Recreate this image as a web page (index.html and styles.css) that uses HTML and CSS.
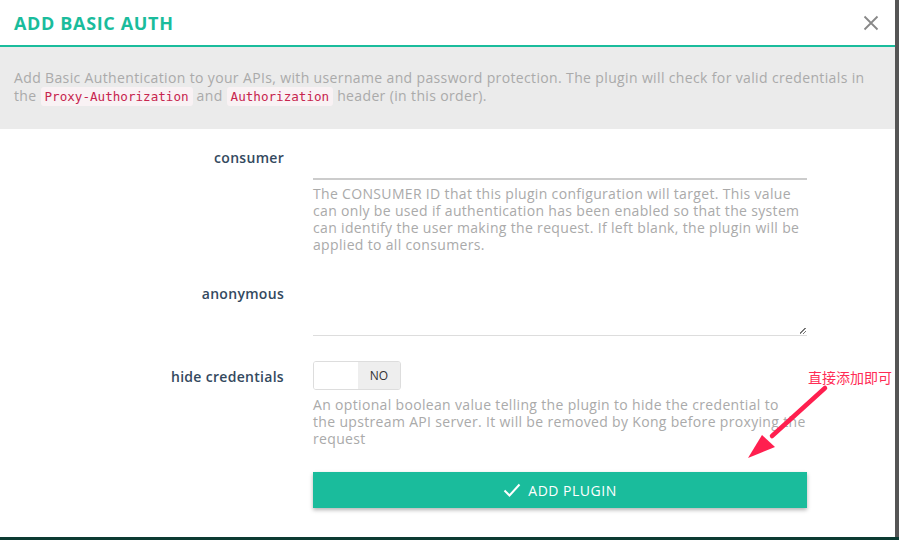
FILE: index.html
```html
<!DOCTYPE html>
<html>
<head>
<meta charset="utf-8">
<link rel="stylesheet" href="styles.css">
</head>
<body>
<div class="modal">
  <div class="modal-header">
    <h1 class="modal-title">ADD BASIC AUTH</h1>
    <button class="close" aria-label="close">
      <svg width="16" height="16" viewBox="0 0 16 16"><path d="M1.5 1.5 L14.5 14.5 M14.5 1.5 L1.5 14.5" stroke="#888" stroke-width="1.8" fill="none"/></svg>
    </button>
  </div>
  <div class="modal-desc">
    Add Basic Authentication to your APIs, with username and password protection. The plugin will check for valid credentials in the <code>Proxy-Authorization</code> and <code>Authorization</code> header (in this order).
  </div>
  <form class="form">
    <div class="row row-consumer">
      <label class="label">consumer</label>
      <div class="field">
        <input class="input" type="text">
        <p class="help">The CONSUMER ID that this plugin configuration will target. This value can only be used if authentication has been enabled so that the system can identify the user making the request. If left blank, the plugin will be applied to all consumers.</p>
      </div>
    </div>
    <div class="row row-anon">
      <label class="label">anonymous</label>
      <div class="field">
        <div class="textarea"><span class="grip"></span></div>
      </div>
    </div>
    <div class="row row-hide">
      <label class="label">hide credentials</label>
      <div class="field">
        <div class="toggle"><span class="toggle-off"></span><span class="toggle-no">NO</span></div>
        <p class="help">An optional boolean value telling the plugin to hide the credential to<br>the upstream API server. It will be removed by Kong before proxying the request</p>
      </div>
    </div>
    <div class="row row-btn">
      <span></span>
      <button type="button" class="btn">
        <svg width="18" height="14" viewBox="0 0 18 14"><path d="M1.5 7.5 L6.5 12.5 L16.5 1.5" stroke="#fff" stroke-width="2" fill="none"/></svg>
        ADD PLUGIN
      </button>
    </div>
  </form>
  <div class="note">直接添加即可</div>
  <svg class="arrow" width="90" height="80" viewBox="0 0 90 80">
    <path d="M79 4 L26 52" stroke="#ff1f4f" stroke-width="4.5" stroke-linecap="round"/>
    <path d="M2 74 L16 51 L29 63 Z" fill="#ff1f4f"/>
  </svg>
</div>
</body>
</html>
```

FILE: styles.css
```css
html, body {
  margin: 0;
  padding: 0;
}
body {
  background: #0c3b32;
  width: 899px;
  height: 540px;
  overflow: hidden;
  font-family: "Open Sans", "Noto Sans CJK SC", sans-serif;
}
.modal {
  position: relative;
  width: 895px;
  height: 537px;
  background: #fff;
  border-right: 4px solid #555;
}
.modal-header {
  height: 45px;
  border-bottom: 2px solid #1abc9c;
  display: flex;
  align-items: center;
  justify-content: space-between;
  padding: 0 14px;
}
.modal-title {
  margin: 0;
  font-size: 18px;
  font-weight: 700;
  color: #1abc9c;
  letter-spacing: 0.65px;
}
.close {
  border: 0;
  background: none;
  padding: 0;
  margin-right: 2px;
  display: flex;
}
.modal-desc {
  background: #ebebeb;
  padding: 22px 14px 23px;
  font-size: 14px;
  letter-spacing: 0.36px;
  line-height: 18px;
  color: #aaa;
}
.modal-desc code {
  font-family: "DejaVu Sans Mono", monospace;
  font-size: 12.6px;
  letter-spacing: 0;
  color: #c7254e;
  background: #f9f2f4;
  padding: 2px 4px;
  border-radius: 3px;
}
.form {
  margin: 0;
  padding-top: 17px;
}
.row {
  display: grid;
  grid-template-columns: 284px 494px;
  column-gap: 29px;
}
.label {
  text-align: right;
  font-size: 14px;
  font-weight: 600;
  letter-spacing: 0.3px;
  color: #34495e;
}
.row-consumer .label { padding-top: 2px; }
.input {
  display: block;
  width: 100%;
  box-sizing: border-box;
  height: 34px;
  border: 0;
  border-bottom: 2px solid #ccc;
  outline: none;
  background: transparent;
}
.help {
  margin: 5px 0 0;
  font-size: 14px;
  letter-spacing: 0.33px;
  line-height: 17px;
  color: #aaa;
}
.row-anon {
  margin-top: 28px;
}
.row-anon .label { padding-top: 3px; }
.textarea {
  position: relative;
  height: 54px;
  border-bottom: 1px solid #ddd;
}
.grip {
  position: absolute;
  right: 1px;
  bottom: 1px;
  width: 6px;
  height: 6px;
  background: linear-gradient(135deg, transparent 40%, #777 40%, #777 52%, transparent 52%, transparent 70%, #777 70%, #777 82%, transparent 82%);
}
.row-hide {
  margin-top: 25px;
}
.row-hide .label { padding-top: 6px; }
.toggle {
  display: flex;
  width: 88px;
  height: 29px;
  box-sizing: border-box;
  border: 1px solid #ddd;
  border-radius: 3px;
  overflow: hidden;
}
.toggle-off {
  width: 44px;
  background: #fff;
}
.toggle-no {
  flex: 1;
  background: #eee;
  font-size: 12px;
  color: #333;
  display: flex;
  align-items: center;
  justify-content: center;
}
.row-hide .help { margin-top: 6px; }
.row-btn {
  margin-top: 25px;
}
.btn {
  height: 36px;
  border: 0;
  background: #1abc9c;
  color: #fff;
  font-family: inherit;
  font-size: 14px;
  letter-spacing: 0.5px;
  display: flex;
  align-items: center;
  justify-content: center;
  gap: 7px;
  box-shadow: 0 2px 4px rgba(0,0,0,0.3);
}
.note {
  position: absolute;
  left: 808px;
  top: 368px;
  font-size: 14px;
  color: #ff2d55;
  font-family: "Noto Sans CJK SC", sans-serif;
  line-height: 18px;
}
.arrow {
  position: absolute;
  left: 746px;
  top: 384px;
}
```
